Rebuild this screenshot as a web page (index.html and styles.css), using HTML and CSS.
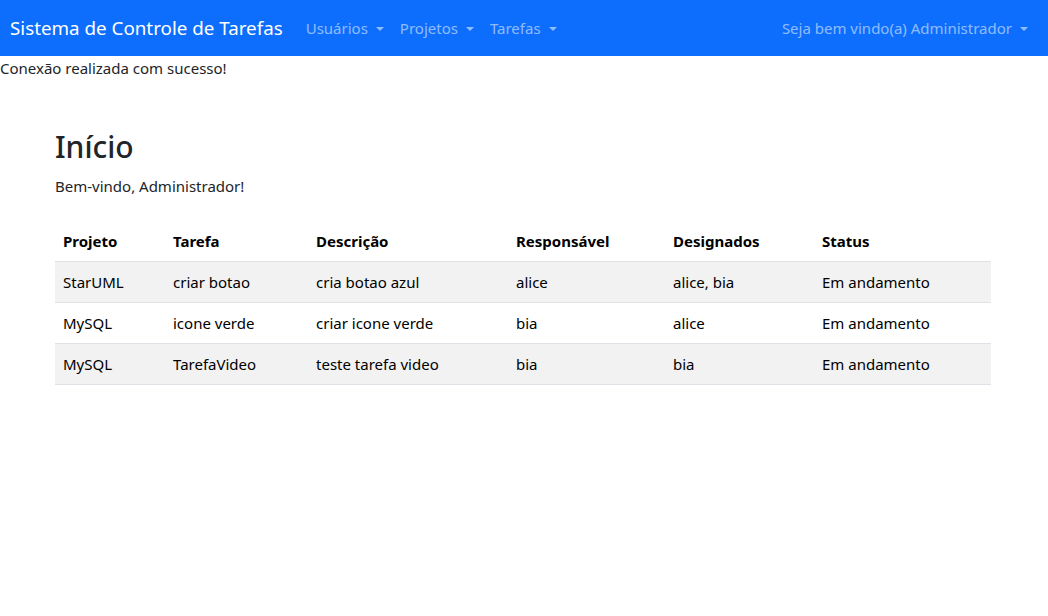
FILE: index.html
```html
<!DOCTYPE html>
<html lang="pt-BR">
<head>
<meta charset="utf-8">
<title>Sistema de Controle de Tarefas</title>
<link rel="stylesheet" href="styles.css">
</head>
<body>
<nav class="navbar">
  <div class="nav-inner">
    <a class="brand" href="#">Sistema de Controle de Tarefas</a>
    <ul class="nav-list">
      <li><a class="nav-link dropdown" href="#">Usuários</a></li>
      <li><a class="nav-link dropdown" href="#">Projetos</a></li>
      <li><a class="nav-link dropdown" href="#">Tarefas</a></li>
    </ul>
    <ul class="nav-list nav-right">
      <li><a class="nav-link dropdown" href="#">Seja bem vindo(a) Administrador</a></li>
    </ul>
  </div>
</nav>
<div class="status-msg">Conexão realizada com sucesso!</div>
<main class="container">
  <h2 class="title">Início</h2>
  <p class="welcome">Bem-vindo, Administrador!</p>
  <table class="table">
    <colgroup>
      <col class="c1"><col class="c2"><col class="c3"><col class="c4"><col class="c5"><col class="c6">
    </colgroup>
    <thead>
      <tr><th>Projeto</th><th>Tarefa</th><th>Descrição</th><th>Responsável</th><th>Designados</th><th>Status</th></tr>
    </thead>
    <tbody>
      <tr class="odd"><td>StarUML</td><td>criar botao</td><td>cria botao azul</td><td>alice</td><td>alice, bia</td><td>Em andamento</td></tr>
      <tr><td>MySQL</td><td>icone verde</td><td>criar icone verde</td><td>bia</td><td>alice</td><td>Em andamento</td></tr>
      <tr class="odd"><td>MySQL</td><td>TarefaVideo</td><td>teste tarefa video</td><td>bia</td><td>bia</td><td>Em andamento</td></tr>
    </tbody>
  </table>
</main>
</body>
</html>
```

FILE: styles.css
```css
* { box-sizing: border-box; }
html, body { margin: 0; padding: 0; }
body {
  font-family: "Noto Sans", "Open Sans", sans-serif;
  font-size: 15px;
  line-height: 24px;
  color: #212529;
  background: #fff;
}
a { text-decoration: none; }
.navbar {
  background: #0d6efd;
  padding: 8px 0;
  height: 56px;
}
.nav-inner {
  display: flex;
  align-items: center;
  padding: 0 12px 0 10px;
}
.brand {
  color: #fff;
  font-size: 18.8px;
  line-height: 30px;
  padding: 5px 0;
  margin-right: 15px;
  white-space: nowrap;
}
.nav-list {
  list-style: none;
  margin: 0;
  padding: 0;
  display: flex;
}
.nav-right { margin-left: auto; }
.nav-link {
  display: block;
  padding: 8px;
  color: rgba(255,255,255,.55);
  white-space: nowrap;
}
.dropdown::after {
  content: "";
  display: inline-block;
  margin-left: 8px;
  vertical-align: 3px;
  border-top: 4.8px solid;
  border-left: 4px solid transparent;
  border-right: 4px solid transparent;
}
.status-msg { padding: 0; }
.container {
  width: 960px;
  margin: 48px auto 0;
  padding: 0 13px 0 11px;
}
.title {
  font-size: 30px;
  font-weight: 500;
  line-height: 38px;
  margin: 0 0 8px;
}
.welcome { margin: 0 0 23px; }
.table {
  width: 100%;
  border-collapse: collapse;
  table-layout: fixed;
  color: #212529;
}
.c1 { width: 110px; }
.c2 { width: 143px; }
.c3 { width: 200px; }
.c4 { width: 157px; }
.c5 { width: 149px; }
.c6 { width: 177px; }
.table th, .table td {
  padding: 8px;
  text-align: left;
  border-bottom: 1px solid #dee2e6;
  white-space: nowrap;
}
.table th { font-weight: 700; color: #000; }
.table td { color: #000; }
.table tr.odd td { background: #f2f2f2; }
```
